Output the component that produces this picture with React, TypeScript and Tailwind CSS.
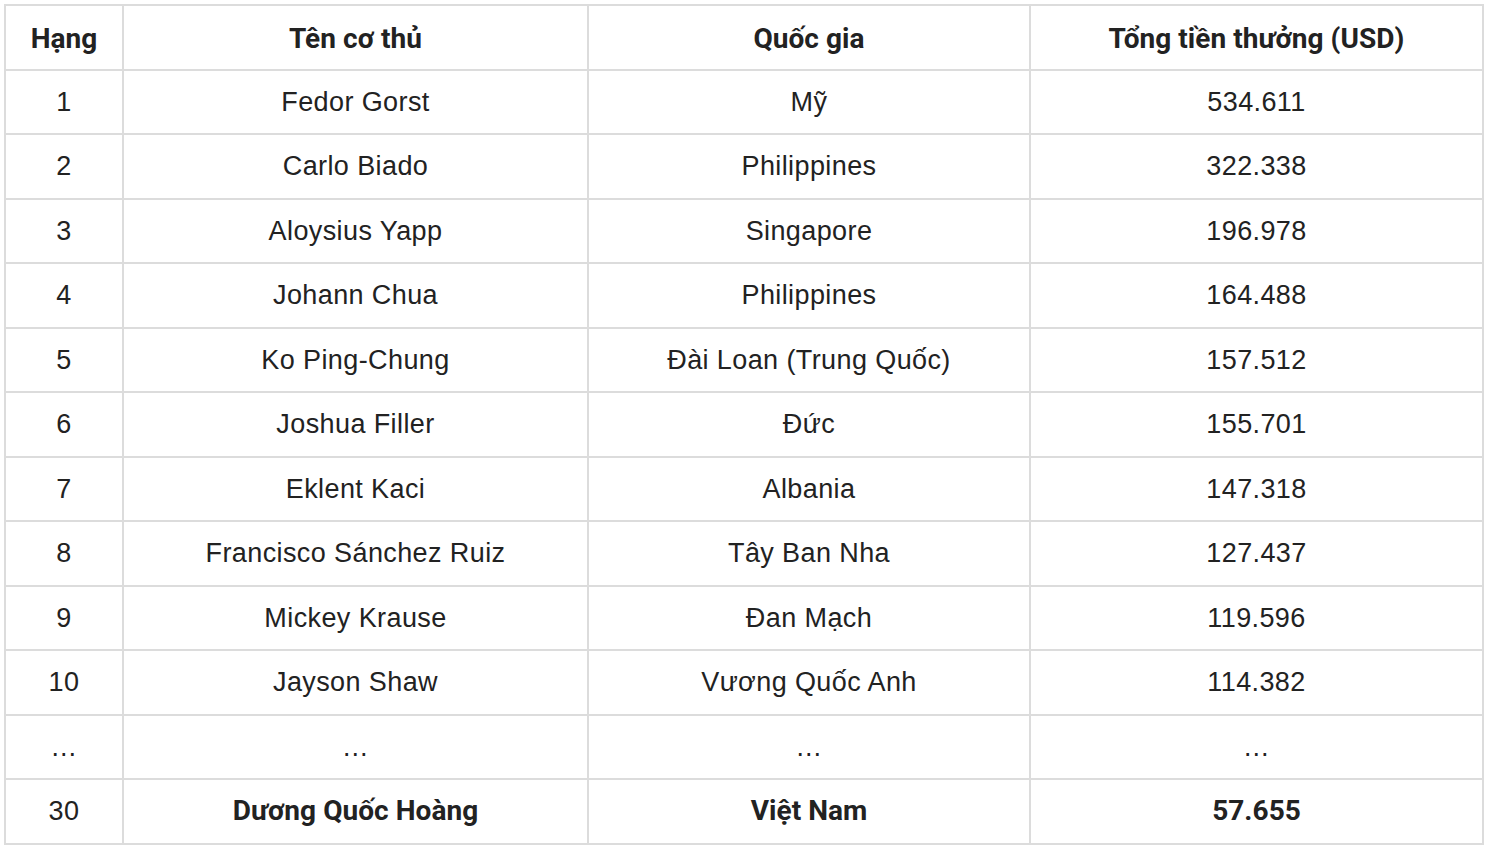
import React from "react";

const rows: [string, string, string, string][] = [
  ["1", "Fedor Gorst", "Mỹ", "534.611"],
  ["2", "Carlo Biado", "Philippines", "322.338"],
  ["3", "Aloysius Yapp", "Singapore", "196.978"],
  ["4", "Johann Chua", "Philippines", "164.488"],
  ["5", "Ko Ping-Chung", "Đài Loan (Trung Quốc)", "157.512"],
  ["6", "Joshua Filler", "Đức", "155.701"],
  ["7", "Eklent Kaci", "Albania", "147.318"],
  ["8", "Francisco Sánchez Ruiz", "Tây Ban Nha", "127.437"],
  ["9", "Mickey Krause", "Đan Mạch", "119.596"],
  ["10", "Jayson Shaw", "Vương Quốc Anh", "114.382"],
  ["…", "…", "…", "…"],
];

const cell = "border-2 border-[#dcdcdc] text-center align-middle p-0";
const body = "font-['Liberation_Sans',Arial,sans-serif] text-[27px] tracking-[0.4px] font-normal";
const head = "font-['Roboto','Liberation_Sans',sans-serif] text-[28px] tracking-[0.05px] font-bold";

export default function App() {
  return (
    <div className="w-[1490px] h-[850px] bg-white pl-[4px] pt-[4px]">
      <table className="border-collapse table-fixed w-[1478px] text-[#222]">
        <colgroup>
          <col className="w-[118px]" />
          <col className="w-[465px]" />
          <col className="w-[442px]" />
          <col className="w-[453px]" />
        </colgroup>
        <thead>
          <tr className="h-[64.5px]">
            <th className={cell + " pt-[3px] " + head}>Hạng</th>
            <th className={cell + " pt-[3px] " + head}>Tên cơ thủ</th>
            <th className={cell + " pt-[3px] " + head}>Quốc gia</th>
            <th className={cell + " pt-[3px] " + head}>Tổng tiền thưởng (USD)</th>
          </tr>
        </thead>
        <tbody>
          {rows.map((r, i) => (
            <tr key={i} className="h-[64.5px]">
              {r.map((c, j) => (
                <td key={j} className={cell + " " + body}>{c}</td>
              ))}
            </tr>
          ))}
          <tr className="h-[64.5px]">
            <td className={cell + " " + body}>30</td>
            <td className={cell + " " + head}>Dương Quốc Hoàng</td>
            <td className={cell + " " + head}>Việt Nam</td>
            <td className={cell + " " + head}>57.655</td>
          </tr>
        </tbody>
      </table>
    </div>
  );
}
